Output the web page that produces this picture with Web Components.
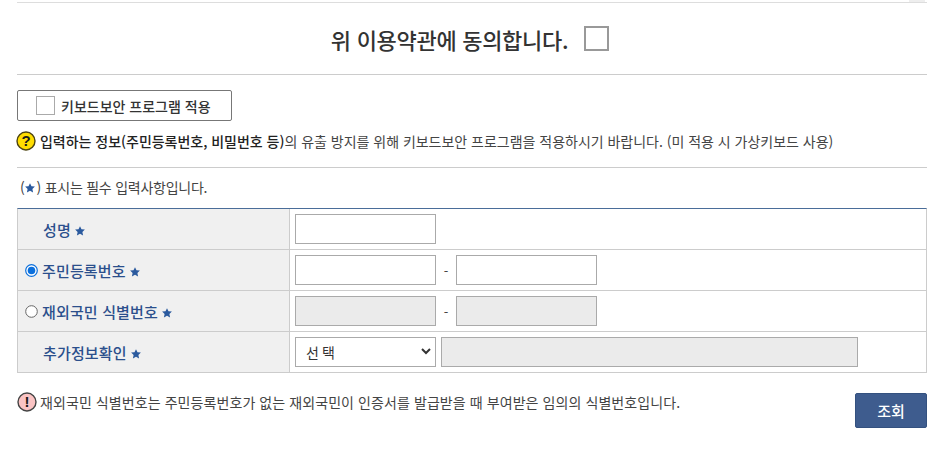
<!DOCTYPE html>
<html lang="ko">
<head>
<meta charset="utf-8">
<title>본인확인</title>
<style>
  html, body { margin: 0; padding: 0; background: #fff; }
  body { font-family: "Noto Sans CJK KR", "Noto Sans", sans-serif; color: #333; }
</style>
</head>
<body>
<auth-page>
  <terms-box></terms-box>
  <agree-row>위 이용약관에 동의합니다.</agree-row>
  <key-toggle>키보드보안 프로그램 적용</key-toggle>
  <notice-line kind="help"><b>입력하는 정보(주민등록번호, 비밀번호 등)</b>의 유출 방지를 위해 키보드보안 프로그램을 적용하시기 바랍니다. (미 적용 시 가상키보드 사용)</notice-line>
  <required-note></required-note>
  <identity-form></identity-form>
  <form-footer>재외국민 식별번호는 주민등록번호가 없는 재외국민이 인증서를 발급받을 때 부여받은 임의의 식별번호입니다.</form-footer>
</auth-page>

<script>
"use strict";

const STAR = `<svg class="star" width="10" height="10" viewBox="0 0 10 10" aria-hidden="true"><path fill="#2b5a9e" d="M5 .2l1.5 3 3.4.4-2.5 2.3.7 3.5L5 7.7 1.9 9.4l.7-3.5L.1 3.6l3.4-.4z"/></svg>`;

class AuthPage extends HTMLElement {
  constructor() {
    super();
    this.attachShadow({ mode: "open" }).innerHTML = `
      <style>
        :host { display: flex; flex-direction: column; width: 910px; margin-left: 17px; }
      </style>
      <slot></slot>
    `;
  }
}

class TermsBox extends HTMLElement {
  constructor() {
    super();
    this.attachShadow({ mode: "open" }).innerHTML = `
      <style>
        :host { display: block; height: 2px; border-bottom: 1px solid #ddd; position: relative; }
        div { position: absolute; right: 2px; top: 0; width: 16px; height: 2px; background: #eee; }
      </style>
      <div></div>
    `;
  }
}

class AgreeRow extends HTMLElement {
  constructor() {
    super();
    this.attachShadow({ mode: "open" }).innerHTML = `
      <style>
        :host {
          display: flex; justify-content: center; align-items: center; gap: 16px;
          height: 71px; padding-right: 4px; border-bottom: 1px solid #ccc;
          font-size: 22px; font-weight: 500; color: #333; letter-spacing: -.3px;
        }
        i { width: 21px; height: 21px; border: 2px solid #999; background: #fff; display: block; }
      </style>
      <span><slot></slot></span><i></i>
    `;
  }
}

class KeyToggle extends HTMLElement {
  constructor() {
    super();
    this.attachShadow({ mode: "open" }).innerHTML = `
      <style>
        :host {
          display: flex; align-items: center; gap: 6px; box-sizing: border-box;
          width: 215px; height: 31px; margin-top: 15px; padding-left: 18px;
          border: 1px solid #777; border-radius: 2px;
          font-size: 14px; font-weight: 500; color: #333;
        }
        i { width: 17px; height: 17px; border: 1px solid #aaa; display: block; }
      </style>
      <i></i><span><slot></slot></span>
    `;
  }
}

class NoticeLine extends HTMLElement {
  constructor() {
    super();
    const help = this.getAttribute("kind") === "help";
    const icon = help
      ? `<circle cx="10" cy="10" r="9" fill="#fd0" stroke="#4d4410" stroke-width="1.4"/><text x="10" y="15.4" text-anchor="middle" font-size="15" font-weight="700" font-family="Liberation Sans" fill="#1a1a1a">?</text>`
      : `<circle cx="10" cy="10" r="9" fill="#fbc4c4" stroke="#444" stroke-width="1.4"/><text x="10" y="15.4" text-anchor="middle" font-size="15" font-weight="700" font-family="Liberation Sans" fill="#1a1a1a">!</text>`;
    this.attachShadow({ mode: "open" }).innerHTML = `
      <style>
        :host {
          display: flex; align-items: center; gap: 3px; height: 28px;
          font-size: 14px; color: #444; white-space: nowrap; letter-spacing: .08px;
        }
        :host([kind="help"]) {
          border-bottom: 1px solid #ccc; height: 29px; padding-bottom: 12px; margin-top: 5px;
          gap: 4px; letter-spacing: -.02px;
        }
        :host([kind="help"]) svg { margin-left: -1px; }
        ::slotted(b) { font-weight: 500; color: #222; }
        svg { flex: none; }
      </style>
      <svg width="20" height="20" viewBox="0 0 20 20">${icon}</svg>
      <span><slot></slot></span>
    `;
  }
}

class RequiredNote extends HTMLElement {
  constructor() {
    super();
    this.attachShadow({ mode: "open" }).innerHTML = `
      <style>
        :host {
          display: flex; align-items: center; height: 38px; padding: 0 0 2px 3px;
          font-size: 14px; color: #444; letter-spacing: -.25px;
        }
        .star { margin: 0 1px; }
      </style>
      <span>(${STAR}) 표시는 필수 입력사항입니다.</span>
    `;
  }
}

class FormRow extends HTMLElement {
  constructor() {
    super();
    const radio = this.getAttribute("radio");
    const mark = radio === null ? "" :
      `<svg class="radio" width="13" height="13" viewBox="0 0 13 13">${radio === "on"
        ? `<circle cx="6.5" cy="6.5" r="5.8" fill="#fff" stroke="#0b6fdc" stroke-width="1.2"/><circle cx="6.5" cy="6.5" r="3.8" fill="#0b6fdc"/>`
        : `<circle cx="6.5" cy="6.5" r="5.8" fill="#fff" stroke="#666" stroke-width="1"/>`}</svg>`;
    this.attachShadow({ mode: "open" }).innerHTML = `
      <style>
        :host { display: grid; grid-template-columns: 272px 1fr; height: 41px; box-sizing: border-box; border-bottom: 1px solid #ccc; }
        .th {
          display: flex; align-items: center; gap: 4px; padding-left: 7px;
          background: #f0f0f0; border-right: 1px solid #ccc;
          font-size: 15px; font-weight: 500; color: #2b4f8c; white-space: nowrap; letter-spacing: .15px;
        }
        :host(:not([radio])) .th { padding-left: 25px; }
        .radio { flex: none; }
        .star { flex: none; margin-left: 0; margin-top: 3px; }
        .td { display: flex; align-items: center; gap: 5px; padding-left: 5px; }
      </style>
      <div class="th">${mark}<span>${this.getAttribute("label")}</span>${STAR}</div>
      <div class="td"><slot></slot></div>
    `;
  }
}

class TextBox extends HTMLElement {
  constructor() {
    super();
    this.attachShadow({ mode: "open" }).innerHTML = `
      <style>
        :host {
          display: block; box-sizing: border-box; width: 141px; height: 30px;
          border: 1px solid #aaa; background: #fff; margin-top: -1px;
        }
        :host([disabled]) { background: #ebebeb; }
        :host([wide]) { width: 417px; }
      </style>
    `;
  }
}

class SelectBox extends HTMLElement {
  constructor() {
    super();
    this.attachShadow({ mode: "open" }).innerHTML = `
      <style>
        :host {
          display: flex; align-items: center; justify-content: space-between;
          box-sizing: border-box; width: 141px; height: 30px; padding: 0 4px 0 10px;
          border: 1px solid #aaa; background: #fff; font-size: 14px; letter-spacing: 3px; color: #333; margin-top: -1px;
        }
      </style>
      <span><slot></slot></span>
      <svg width="10" height="7" viewBox="0 0 10 7"><path d="M1 1l4 4 4-4" fill="none" stroke="#333" stroke-width="2"/></svg>
    `;
  }
}

class IdentityForm extends HTMLElement {
  constructor() {
    super();
    this.attachShadow({ mode: "open" }).innerHTML = `
      <style>
        :host { display: block; border-top: 1px solid #4a6d99; border-left: 1px solid #ccc; border-right: 1px solid #ccc; }
        span { width: 10px; text-align: center; font-size: 13px; color: #444; }
      </style>
      <form-row label="성명"><text-box></text-box></form-row>
      <form-row label="주민등록번호" radio="on"><text-box></text-box><span>-</span><text-box></text-box></form-row>
      <form-row label="재외국민 식별번호" radio="off"><text-box disabled></text-box><span>-</span><text-box disabled></text-box></form-row>
      <form-row label="추가정보확인"><select-box>선택</select-box><text-box disabled wide></text-box></form-row>
    `;
  }
}

class FormFooter extends HTMLElement {
  constructor() {
    super();
    this.attachShadow({ mode: "open" }).innerHTML = `
      <style>
        :host { display: flex; justify-content: space-between; align-items: flex-start; margin-top: 15px; }
        button {
          width: 72px; height: 35px; margin-top: 5px; border: 1px solid #34517f; border-radius: 2px;
          background: #3e5c8e; color: #fff; font: 500 15px "Noto Sans CJK KR", sans-serif; padding: 0;
        }
      </style>
      <notice-line kind="warn"><slot></slot></notice-line>
      <button type="button">조회</button>
    `;
  }
}

customElements.define("auth-page", AuthPage);
customElements.define("terms-box", TermsBox);
customElements.define("agree-row", AgreeRow);
customElements.define("key-toggle", KeyToggle);
customElements.define("notice-line", NoticeLine);
customElements.define("required-note", RequiredNote);
customElements.define("form-row", FormRow);
customElements.define("text-box", TextBox);
customElements.define("select-box", SelectBox);
customElements.define("identity-form", IdentityForm);
customElements.define("form-footer", FormFooter);
</script>
</body>
</html>
